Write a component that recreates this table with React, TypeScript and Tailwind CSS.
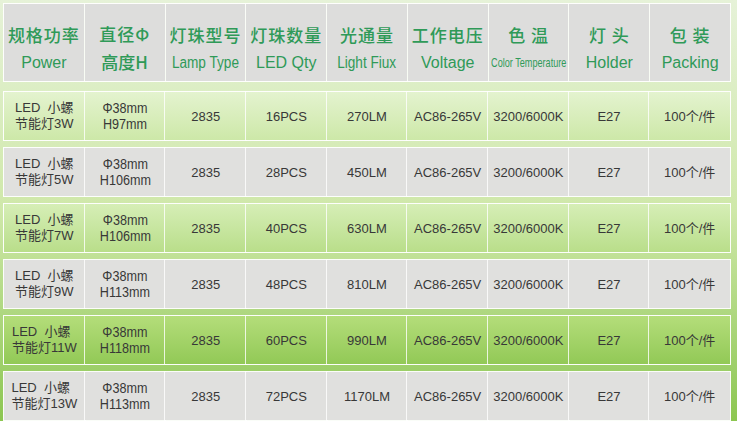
import React from 'react';

const headers = [
  { zh: '规格功率', en: 'Power' },
  { zh: '直径Φ', en: '高度H', zhEn: true },
  { zh: '灯珠型号', en: 'Lamp Type', narrow: true },
  { zh: '灯珠数量', en: 'LED Qty' },
  { zh: '光通量', en: 'Light  Fiux', narrow: true },
  { zh: '工作电压', en: 'Voltage' },
  { zh: '色 温', en: 'Color Temperature', tiny: true },
  { zh: '灯 头', en: 'Holder' },
  { zh: '包 装', en: 'Packing' },
];

const rows = [
  { w: '3W', h: 'H97mm', qty: '16PCS', lm: '270LM', bg: 'bg-gradient-to-b from-[#e4f3cf] to-[#cde8a8]' },
  { w: '5W', h: 'H106mm', qty: '28PCS', lm: '450LM', bg: 'bg-[#e0e0de]' },
  { w: '7W', h: 'H106mm', qty: '40PCS', lm: '630LM', bg: 'bg-gradient-to-b from-[#d6eeb6] to-[#b9de8a]' },
  { w: '9W', h: 'H113mm', qty: '48PCS', lm: '810LM', bg: 'bg-[#e0e0de]' },
  { w: '11W', h: 'H118mm', qty: '60PCS', lm: '990LM', bg: 'bg-gradient-to-b from-[#b4dd7a] to-[#92c956]' },
  { w: '13W', h: 'H113mm', qty: '72PCS', lm: '1170LM', bg: 'bg-[#e0e0de]' },
];

function Cell({ bg, children }: { bg: string; children: React.ReactNode }) {
  return (
    <div className={`${bg} flex flex-col items-center justify-center text-center text-[13px] leading-[15px] text-[#383838] outline outline-1 outline-white/80`}>
      {children}
    </div>
  );
}

export default function App() {
  return (
    <div
      className="w-[737px] h-[421px] overflow-hidden bg-gradient-to-b from-[#e6f2d8] via-[#cfe8a9] to-[#8cc650] pl-[3px] pr-[6px] pt-[3px] flex flex-col"
      style={{ fontFamily: '"Liberation Sans", "Noto Sans CJK SC", sans-serif' }}
    >
      {/* header */}
      <div className="grid grid-cols-9 h-[84px] gap-px bg-white/80 border border-white/80">
        {headers.map((h, i) => (
          <div key={i} className="bg-[#dddddc] flex flex-col items-center justify-center pt-[10px] text-[#2f9a58]">
            <div className="text-[17px] leading-[22px] tracking-[1px] font-medium" style={{ fontFamily: '"Noto Sans CJK SC", sans-serif' }}>
              {h.zh}
            </div>
            {h.zhEn ? (
              <div className="text-[17px] leading-[22px] mt-[6px] font-medium" style={{ fontFamily: '"Noto Sans CJK SC", sans-serif' }}>
                {h.en}
              </div>
            ) : h.tiny ? (
              <div className="mt-[8px] text-[13px] leading-[18px] scale-x-[0.7] whitespace-nowrap">{h.en}</div>
            ) : (
              <div className={`mt-[8px] text-[16px] leading-[18px] whitespace-nowrap ${h.narrow ? 'scale-x-[0.85]' : ''}`}>{h.en}</div>
            )}
          </div>
        ))}
      </div>

      <div className="flex flex-col gap-[6px] mt-[9px]">
        {rows.map((r, i) => (
          <div key={i} className="grid grid-cols-9 h-[50px] border border-white/80">
            <Cell bg={r.bg}>
              <div className="text-left leading-[16px]">
                <div>LED&nbsp; 小螺</div>
                <div>节能灯{r.w}</div>
              </div>
            </Cell>
            <Cell bg={r.bg}>
              <div className="leading-[16px]">
                <div className="scale-x-90 text-[14px]">Φ38mm</div>
                <div className="scale-x-90 text-[14px]">{r.h}</div>
              </div>
            </Cell>
            <Cell bg={r.bg}>2835</Cell>
            <Cell bg={r.bg}>{r.qty}</Cell>
            <Cell bg={r.bg}>{r.lm}</Cell>
            <Cell bg={r.bg}>AC86-265V</Cell>
            <Cell bg={r.bg}>3200/6000K</Cell>
            <Cell bg={r.bg}>E27</Cell>
            <Cell bg={r.bg}>100个/件</Cell>
          </div>
        ))}
      </div>
    </div>
  );
}
